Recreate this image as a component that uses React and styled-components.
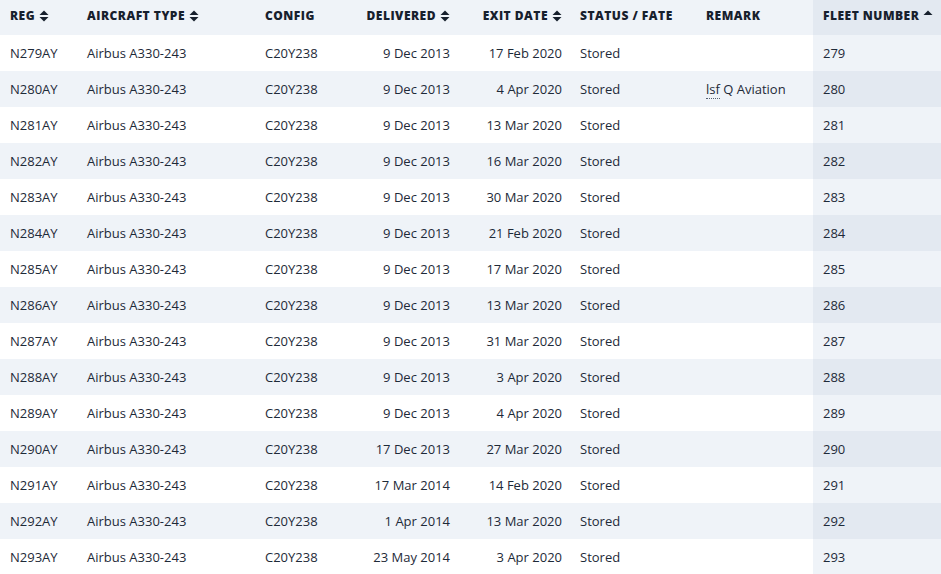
import styled, { createGlobalStyle } from "styled-components";

const GlobalStyle = createGlobalStyle`
  body {
    margin: 0;
    background: #fff;
    font-family: "Open Sans", "Noto Sans", sans-serif;
  }
`;

const columns = [
  { key: "reg", label: "REG", width: 77, sort: "both" },
  { key: "type", label: "AIRCRAFT TYPE", width: 178, sort: "both" },
  { key: "config", label: "CONFIG", width: 90 },
  { key: "delivered", label: "DELIVERED", width: 115, sort: "both", right: true },
  { key: "exit", label: "EXIT DATE", width: 110, sort: "both", right: true, padRight: 8 },
  { key: "status", label: "STATUS / FATE", width: 126 },
  { key: "remark", label: "REMARK", width: 117 },
  { key: "fleet", label: "FLEET NUMBER", width: 128, sort: "up", active: true },
];

const rows = [
  ["N279AY", "9 Dec 2013", "17 Feb 2020", "", "279"],
  ["N280AY", "9 Dec 2013", "4 Apr 2020", "lsf", "280"],
  ["N281AY", "9 Dec 2013", "13 Mar 2020", "", "281"],
  ["N282AY", "9 Dec 2013", "16 Mar 2020", "", "282"],
  ["N283AY", "9 Dec 2013", "30 Mar 2020", "", "283"],
  ["N284AY", "9 Dec 2013", "21 Feb 2020", "", "284"],
  ["N285AY", "9 Dec 2013", "17 Mar 2020", "", "285"],
  ["N286AY", "9 Dec 2013", "13 Mar 2020", "", "286"],
  ["N287AY", "9 Dec 2013", "31 Mar 2020", "", "287"],
  ["N288AY", "9 Dec 2013", "3 Apr 2020", "", "288"],
  ["N289AY", "9 Dec 2013", "4 Apr 2020", "", "289"],
  ["N290AY", "17 Dec 2013", "27 Mar 2020", "", "290"],
  ["N291AY", "17 Mar 2014", "14 Feb 2020", "", "291"],
  ["N292AY", "1 Apr 2014", "13 Mar 2020", "", "292"],
  ["N293AY", "23 May 2014", "3 Apr 2020", "", "293"],
];

function SortIcon({ dir }) {
  return (
    <Caret viewBox="0 0 10 12" width="10" height="12">
      <path d="M5 0.5 L9.5 5 H0.5 Z" />
      {dir === "both" && <path d="M5 11.5 L9.5 7 H0.5 Z" />}
    </Caret>
  );
}

export default function App() {
  return (
    <>
      <GlobalStyle />
      <Table>
        <colgroup>
          {columns.map((c) => (
            <col key={c.key} style={{ width: c.width }} />
          ))}
        </colgroup>
        <thead>
          <tr>
            {columns.map((c) => (
              <Th key={c.key} $right={c.right} $active={c.active} $padRight={c.padRight}>
                <HeadLabel $right={c.right}>
                  {c.label}
                  {c.sort && <SortIcon dir={c.sort} />}
                </HeadLabel>
              </Th>
            ))}
          </tr>
        </thead>
        <tbody>
          {rows.map(([reg, delivered, exit, remark, fleet], i) => (
            <Row key={reg} $striped={i % 2 === 1}>
              <Td>{reg}</Td>
              <Td>Airbus A330-243</Td>
              <Td>C20Y238</Td>
              <Td $right>{delivered}</Td>
              <Td $right $padRight={8}>{exit}</Td>
              <Td>Stored</Td>
              <Td>
                {remark && (
                  <>
                    <Abbr title="leased from">lsf</Abbr> Q Aviation
                  </>
                )}
              </Td>
              <Td $active $striped={i % 2 === 1}>{fleet}</Td>
            </Row>
          ))}
        </tbody>
      </Table>
    </>
  );
}

const Table = styled.table`
  width: 941px;
  table-layout: fixed;
  border-collapse: collapse;
  color: #1e2a38;
`;

const Th = styled.th`
  height: 35px;
  box-sizing: border-box;
  padding: 0 ${(p) => p.$padRight ?? 10}px 3px 10px;
  line-height: 16px;
  text-align: ${(p) => (p.$right ? "right" : "left")};
  background: ${(p) => (p.$active ? "#e3e9f1" : "#eff3f8")};
  font-size: 12px;
  font-weight: 800;
  color: #17202d;
  white-space: nowrap;
  letter-spacing: 0.5px;
`;

const HeadLabel = styled.div`
  display: flex;
  align-items: center;
  justify-content: ${(p) => (p.$right ? "flex-end" : "flex-start")};
  gap: 4px;
  height: 16px;
`;

const Caret = styled.svg`
  display: block;
  flex-shrink: 0;
  fill: #17202d;
`;

const Row = styled.tr`
  background: ${(p) => (p.$striped ? "#eff3f8" : "#fff")};
`;

const Td = styled.td`
  height: 36px;
  padding: 0 ${(p) => p.$padRight ?? 10}px 0 10px;
  text-align: ${(p) => (p.$right ? "right" : "left")};
  font-size: 13px;
  white-space: nowrap;
  ${(p) => p.$active && `background: ${p.$striped ? "#e3e9f1" : "#eff3f8"};`}
`;

const Abbr = styled.abbr`
  text-decoration: none;
  border-bottom: 1px dotted #556070;
  cursor: help;
`;
